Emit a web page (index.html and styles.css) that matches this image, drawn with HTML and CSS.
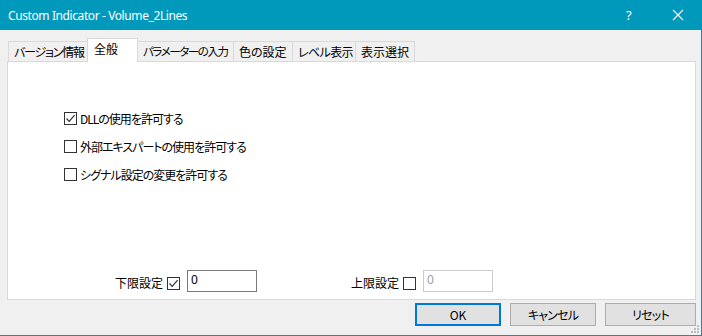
FILE: index.html
```html
<!DOCTYPE html>
<html lang="ja">
<head>
<meta charset="utf-8">
<title>Custom Indicator - Volume_2Lines</title>
<link rel="stylesheet" href="styles.css">
</head>
<body>
<div class="window">
  <div class="titlebar">
    <span class="title">Custom Indicator - Volume_2Lines</span>
    <span class="help">?</span>
    <span class="close"><svg width="12" height="12" viewBox="0 0 12 12"><path d="M1 1 L11 11 M11 1 L1 11" stroke="#fff" stroke-width="1.1" fill="none"/></svg></span>
  </div>
  <div class="body">
    <div class="tabs">
      <div class="tab t1">バージョン情報</div>
      <div class="tab t2 active">全般</div>
      <div class="tab t3">パラメーターの入力</div>
      <div class="tab t4">色の設定</div>
      <div class="tab t5">レベル表示</div>
      <div class="tab t6">表示選択</div>
    </div>
    <div class="panel">
      <div class="options">
        <label class="opt"><span class="cb checked"><svg width="11" height="11" viewBox="0 0 11 11"><path d="M1.5 5.5 L4.2 8.3 L9.6 2.2" stroke="#333" stroke-width="1.2" fill="none"/></svg></span><span class="opt-text">DLLの使用を許可する</span></label>
        <label class="opt"><span class="cb"></span><span class="opt-text">外部エキスパートの使用を許可する</span></label>
        <label class="opt"><span class="cb"></span><span class="opt-text">シグナル設定の変更を許可する</span></label>
      </div>
      <div class="limits">
        <div class="limit lower">
          <span class="lim-label">下限設定</span>
          <span class="cb checked lim-cb"><svg width="11" height="11" viewBox="0 0 11 11"><path d="M1.5 5.5 L4.2 8.3 L9.6 2.2" stroke="#333" stroke-width="1.2" fill="none"/></svg></span>
          <span class="field">0</span>
        </div>
        <div class="limit upper">
          <span class="lim-label">上限設定</span>
          <span class="cb lim-cb"></span>
          <span class="field disabled">0</span>
        </div>
      </div>
    </div>
    <div class="buttons">
      <button class="btn ok">OK</button>
      <button class="btn cancel">キャンセル</button>
      <button class="btn reset">リセット</button>
    </div>
    <svg class="grip" width="9" height="9" viewBox="0 0 9 9">
      <rect x="7" y="1" width="2" height="2" fill="#bcbcbc"/>
      <rect x="4" y="4" width="2" height="2" fill="#bcbcbc"/>
      <rect x="7" y="4" width="2" height="2" fill="#bcbcbc"/>
      <rect x="1" y="7" width="2" height="2" fill="#bcbcbc"/>
      <rect x="4" y="7" width="2" height="2" fill="#bcbcbc"/>
      <rect x="7" y="7" width="2" height="2" fill="#bcbcbc"/>
    </svg>
  </div>
</div>
</body>
</html>
```
FILE: styles.css
```css
* { box-sizing: border-box; }
html, body { margin: 0; padding: 0; }
body {
  width: 702px;
  height: 336px;
  overflow: hidden;
  background: #f0f0f0;
  font-family: "Noto Sans CJK JP", "Noto Sans", sans-serif;
  font-size: 12px;
  color: #000;
  font-feature-settings: "palt";
}
.window {
  width: 702px;
  height: 336px;
  display: flex;
  flex-direction: column;
  border-right: 1px solid #0099bc;
  border-bottom: 1px solid #0099bc;
  background: #f0f0f0;
}
.titlebar {
  height: 30px;
  flex: none;
  background: #0099bc;
  color: #fff;
  display: flex;
  align-items: center;
  padding-left: 8px;
}
.title {
  font-family: "Noto Sans", sans-serif;
  font-size: 12px;
  flex: 1;
  letter-spacing: -0.4px;
}
.help {
  font-family: "Noto Sans", sans-serif;
  font-size: 13px;
  width: 12px;
  margin-right: 34px;
}
.close {
  width: 12px;
  height: 12px;
  display: flex;
  margin-right: 17px;
}
.body {
  flex: 1;
  display: flex;
  flex-direction: column;
  padding: 8px 5px 0 7px;
  position: relative;
}
.tabs {
  display: flex;
  align-items: flex-end;
  height: 23px;
  padding-left: 1px;
  position: relative;
  z-index: 1;
}
.tab {
  height: 20px;
  border: 1px solid #d9d9d9;
  border-bottom: none;
  border-right: none;
  background: #f0f0f0;
  padding: 0 0 0 5px;
  line-height: 19px;
  white-space: nowrap;
  overflow: hidden;
  font-size: 12px;
  letter-spacing: -0.8px;
}
.tab.t6 { border-right: 1px solid #d9d9d9; }
.tab.active {
  height: 24px;
  background: #fff;
  border-right: 1px solid #d9d9d9;
  margin-bottom: -1px;
  line-height: 19px;
  padding-left: 6px;
  font-size: 12px;
  letter-spacing: 0;
}
.tab.active + .tab { border-left: none; }
.t1 { width: 79px; letter-spacing: -1.2px; }
.t2 { width: 51px; }
.t3 { width: 95px; font-size: 11.5px; letter-spacing: -1.4px; }
.t4 { width: 59px; letter-spacing: 0; }
.t5 { width: 63px; letter-spacing: -0.6px; }
.t6 { width: 60px; letter-spacing: 0; }
.panel {
  width: 689px;
  height: 239px;
  background: #fff;
  border: 1px solid #d9d9d9;
  display: flex;
  flex-direction: column;
  padding: 0 0 7px 56px;
}
.options {
  display: flex;
  flex-direction: column;
  gap: 11px;
  margin-top: 48px;
}
.opt {
  display: flex;
  align-items: center;
  height: 17px;
}
.cb {
  width: 13px;
  height: 13px;
  border: 1px solid #333;
  background: #fff;
  display: inline-flex;
  align-items: center;
  justify-content: center;
  flex: none;
}
.opt-text {
  margin-left: 3px;
  line-height: 17px;
  letter-spacing: -1px;
}
.limits {
  margin-top: auto;
  display: flex;
  align-items: flex-end;
  padding-left: 51px;
}
.limit {
  display: flex;
  align-items: flex-end;
}
.upper { margin-left: 94px; }
.lim-label {
  line-height: 16px;
  margin-bottom: 1px;
  margin-right: 4px;
}
.lim-cb {
  margin-bottom: 2px;
  margin-right: 7px;
}
.field {
  width: 70px;
  height: 22px;
  border: 1px solid #7a7a7a;
  background: #fff;
  padding: 0 0 0 3px;
  line-height: 18px;
  font-family: "Noto Sans", sans-serif;
  font-size: 12px;
}
.field.disabled {
  border-color: #cccccc;
  color: #a0a0a0;
}
.buttons {
  display: flex;
  justify-content: flex-end;
  gap: 9px;
  margin-top: 3px;
  padding-right: 0;
}
.btn {
  height: 23px;
  background: #e1e1e1;
  border: 1px solid #adadad;
  font-family: "Noto Sans CJK JP", "Noto Sans", sans-serif;
  font-feature-settings: "palt";
  font-size: 12px;
  letter-spacing: -0.8px;
  color: #000;
  padding: 0;
  margin: 0;
}
.ok { width: 86px; border: 2px solid #0078d7; letter-spacing: 0; }
.cancel { width: 86px; }
.reset { width: 91px; }
.grip {
  position: absolute;
  right: 2px;
  bottom: 2px;
}
```
